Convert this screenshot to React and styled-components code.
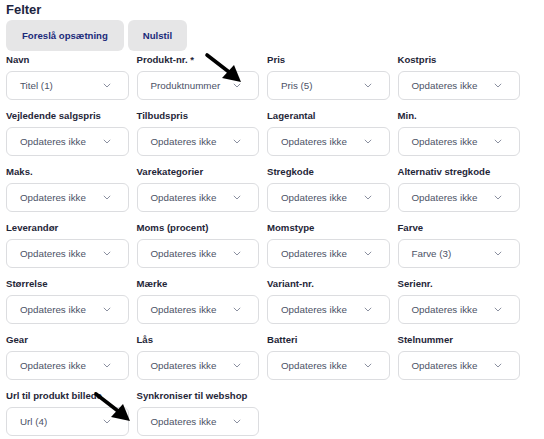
import React from 'react';
import styled, { createGlobalStyle } from 'styled-components';

const GlobalStyle = createGlobalStyle`
    html, body {
        margin      : 0;
        padding     : 0;
        background  : #fff;
        font-family : "Liberation Sans", Arial, sans-serif;
    }
`;

const fields = [
    { label: 'Navn',                      value: 'Titel (1)' },
    { label: 'Produkt-nr. *',             value: 'Produktnummer' },
    { label: 'Pris',                      value: 'Pris (5)' },
    { label: 'Kostpris' },
    { label: 'Vejledende salgspris' },
    { label: 'Tilbudspris' },
    { label: 'Lagerantal' },
    { label: 'Min.' },
    { label: 'Maks.' },
    { label: 'Varekategorier' },
    { label: 'Stregkode' },
    { label: 'Alternativ stregkode' },
    { label: 'Leverandør' },
    { label: 'Moms (procent)' },
    { label: 'Momstype' },
    { label: 'Farve',                     value: 'Farve (3)' },
    { label: 'Størrelse' },
    { label: 'Mærke' },
    { label: 'Variant-nr.' },
    { label: 'Serienr.' },
    { label: 'Gear' },
    { label: 'Lås' },
    { label: 'Batteri' },
    { label: 'Stelnummer' },
    { label: 'Url til produkt billede',   value: 'Url (4)' },
    { label: 'Synkroniser til webshop' },
];

const Page = styled.div`
    position    : relative;
    padding     : 2px 24px 0 6px;
    height      : 439px;
    overflow    : hidden;
    box-sizing  : border-box;
`;

const Title = styled.h2`
    margin      : 0;
    font-size   : 13px;
    font-weight : 700;
    color       : #1d2540;
    line-height : 16px;
`;

const Toolbar = styled.div`
    display     : flex;
    gap         : 4px;
    margin-top  : 2px;
`;

const Button = styled.button`
    height          : 31px;
    padding         : 0 ${p => p.$pad || 16}px;
    border          : none;
    border-radius   : 6px;
    background      : #e6e6e7;
    color           : #1b2a7a;
    font-family     : inherit;
    font-size       : 9.6px;
    font-weight     : 700;
    cursor          : pointer;
`;

const Grid = styled.div`
    display                 : grid;
    grid-template-columns   : repeat(4, 1fr);
    column-gap              : 8px;
    row-gap                 : 8px;
    margin-top              : 1px;
`;

const Field = styled.div`
    display         : flex;
    flex-direction  : column;
`;

const Label = styled.label`
    font-size   : 9.6px;
    font-weight : 700;
    color       : #1f2638;
    line-height : 14px;
    height      : 18px;
    padding-top : 1px;
    white-space : nowrap;
`;

const Select = styled.div`
    display         : flex;
    align-items     : center;
    justify-content : space-between;
    height          : 27px;
    padding         : 0 17px 0 13px;
    border          : 1px solid #dcdde0;
    border-radius   : 6px;
    background      : #fff;
    font-size       : 9.8px;
    color           : #4c5266;
`;

const Chevron = () => (
    <svg width="8" height="5" viewBox="0 0 8 5">
        <path d="M0.8 0.8l3.2 3.2L7.2 0.8" fill="none" stroke="#8b90a0" strokeWidth="1" />
    </svg>
);

const Pointer = styled.svg`
    position        : absolute;
    pointer-events  : none;
    left            : ${p => p.$x}px;
    top             : ${p => p.$y}px;
`;

const Arrow = ({ x, y }) => (
    <Pointer $x={x} $y={y} width="40" height="34" viewBox="0 0 40 34">
        <line x1="3" y1="3" x2="25" y2="20" stroke="#000" strokeWidth="3.6" strokeLinecap="round" />
        <polygon points="37,30 18,26 30,13" fill="#000" />
    </Pointer>
);

export default function App() {
    return (
        <>
            <GlobalStyle />
            <Page>
                <Title>Felter</Title>
                <Toolbar>
                    <Button $pad={16}>Foreslå opsætning</Button>
                    <Button $pad={15}>Nulstil</Button>
                </Toolbar>
                <Grid>
                    {fields.map(f => (
                        <Field key={f.label}>
                            <Label>{f.label}</Label>
                            <Select>
                                <span>{f.value || 'Opdateres ikke'}</span>
                                <Chevron />
                            </Select>
                        </Field>
                    ))}
                </Grid>
                <Arrow x={204} y={52} />
                <Arrow x={93} y={391} />
            </Page>
        </>
    );
}
